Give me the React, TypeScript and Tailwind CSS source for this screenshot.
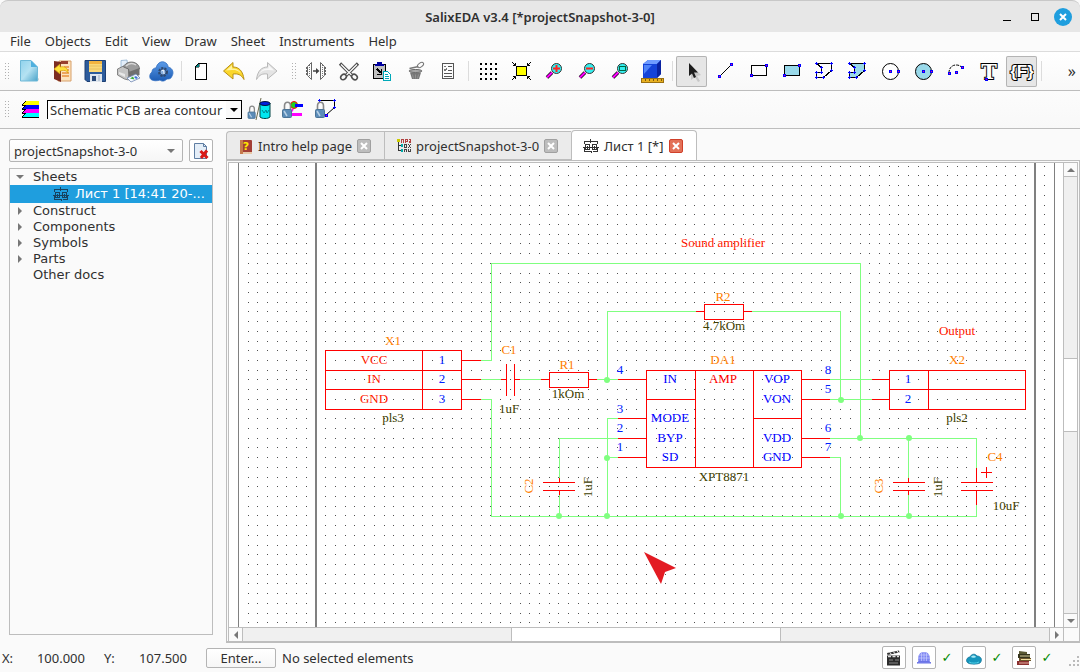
import React from 'react';
import clsx from 'clsx';

const GREEN = '#80ff80';
const RED = '#ff0000';

const Icon: React.FC<{ children: React.ReactNode; crisp?: boolean }> = ({ children, crisp }) => (
  <svg viewBox="0 0 25 25" className="size-[25px] shrink-0" fill="none" shapeRendering={crisp ? 'crispEdges' : 'auto'} aria-hidden="true">
    {children}
  </svg>
);

// small blue handle with a red core, as on every drawing tool
const Handle = ({ x, y }: { x: number; y: number }) => (
  <>
    <rect x={x - 1} y={y - 1} width="3" height="3" fill="#0000ff" />
    <rect x={x} y={y} width="1" height="1" fill="#ff0080" />
  </>
);

const Cross = ({ x, y }: { x: number; y: number }) => (
  <path d={`M${x - 1} ${y + 0.5}h3M${x + 0.5} ${y - 1}v3`} stroke="#0000ff" />
);

const NewIcon = () => (
  <Icon>
    <defs>
      <linearGradient id="page" x1="0" y1="0" x2="1" y2="1">
        <stop offset="0" stopColor="#8fd2ec" /><stop offset=".5" stopColor="#b5e2f2" /><stop offset="1" stopColor="#4aa3c9" />
      </linearGradient>
    </defs>
    <path d="M5 22h16l1-2-1-1z" fill="#9aa" opacity=".6" />
    <path d="M3.500 1.500H14l6.500 6.500v14H3.500z" fill="url(#page)" stroke="#6fb9d8" />
    <path d="M14 1.500V8h6.500z" fill="#4fb0de" />
  </Icon>
);

const OpenIcon = () => (
  <Icon>
    <path d="M9 2h12v20H8z" fill="#fbe3c0" stroke="#d8a06a" />
    <path d="M14 8h5M14 11h5M12 14h7M12 17h7" stroke="#e9913c" strokeWidth="1.500" />
    <path d="M4 2l7 1v20l-7-3z" fill="#7d2d22" />
    <path d="M11 2h7v3h-7z" fill="#99402f" />
    <path d="M4 10l6-5v3c5-1 8 1 8 6-2-3-4-3-8-2v3z" fill="#ffe23c" stroke="#d39b12" strokeWidth=".7" />
  </Icon>
);

const SaveIcon = () => (
  <Icon>
    <path d="M2 1.500h20.500v21H4l-2-2z" fill="#2d5c9c" stroke="#1d3f73" />
    <rect x="6" y="2" width="13" height="11" fill="#fbd978" />
    <path d="M6 2h13v3H6z" fill="#f3b440" />
    <path d="M6 7h13M6 10h13" stroke="#e8c163" />
    <rect x="7" y="15" width="12" height="8" fill="#dfe6ee" />
    <rect x="9" y="17" width="4" height="5" fill="#2b4a78" />
    <path d="M16 16v6" stroke="#9fb0c4" />
  </Icon>
);

const PrinterIcon = () => (
  <Icon>
    <path d="M5 9V1.500l6-.5 1 8z" fill="#e3eefa" stroke="#8fb0d0" strokeWidth=".8" />
    <path d="M1.500 10l6-3 5 3v11l-4-1-7-4z" fill="#c4c4c4" stroke="#6f6f6f" strokeWidth=".8" />
    <path d="M7.500 8c2-5 8-6 12-4 3 1.500 4 4 4 6l-10 5-1-5z" fill="#9c9c9c" stroke="#626262" strokeWidth=".8" />
    <path d="M10 7c3-3 7-3 10-1" stroke="#d8d8d8" strokeWidth="1.500" />
    <path d="M12.500 13l11-4v7l-10 5z" fill="#6f6f6f" />
    <path d="M3 13l6 2v3l-6-3z" fill="#e8e8e8" />
    <path d="M11 19l9-4 4 4-9 4z" fill="#f4f8ff" stroke="#6f86b0" strokeWidth=".8" />
    <path d="M14 19.500l3-2 1.500 3z" fill="#3dad3d" /><path d="M18 18l2-1 2 2-2 1z" fill="#3e74d8" />
  </Icon>
);

const CloudGearIcon = () => (
  <Icon>
    <defs>
      <linearGradient id="cloud" x1="0" y1="0" x2="0" y2="1">
        <stop offset="0" stopColor="#5b9be8" /><stop offset="1" stopColor="#1d5cb4" />
      </linearGradient>
    </defs>
    <path d="M3 21c-3-1-3-6 0-8 0-3 2-4 4-4 1-4 4-7 8-6 3 1 4 3 4 5 5 1 6 6 4 9-1 3-3 3-5 3-2 2-5 3-7 1-3 1-6 1-8 0z" fill="url(#cloud)" stroke="#2e6cc0" strokeWidth=".8" />
    <circle cx="14" cy="13" r="4" stroke="#2f4a70" strokeWidth="2" strokeDasharray="2.200 1.100" />
    <circle cx="14" cy="13" r="3" fill="#86aede" stroke="#2c456c" strokeWidth=".8" />
    <path d="M12.500 12l2-1 .5 4" stroke="#e8f0fa" />
  </Icon>
);

const SheetIcon = () => (
  <Icon crisp>
    <path d="M10.500 4.500h8v16h-11v-13z" fill="#fff" stroke="#000" />
    <path d="M11 4v4H7l4-4z" fill="#008080" stroke="#000" strokeWidth=".5" />
  </Icon>
);

const UndoIcon = () => (
  <Icon>
    <path d="M2.500 12L12 3.500V8c6 0 10 4 11 12.500-3-5-6-6-11-5.500V20z" fill="#fbd72b" stroke="#b8901a" />
    <path d="M5 11.500l6-5.500v3.500c4 0 7 1 9 5-3-3-5-3.500-9-3.500z" fill="#fff3a0" />
  </Icon>
);

const RedoIcon = () => (
  <Icon>
    <path d="M23 12l-9.500-8.500V8c-6 0-10 4-11 12.500 3-5 6-6 11-5.500V20z" fill="#e4e4e4" stroke="#b9b9b9" />
    <path d="M20 11.500L14.500 6v3.500c-4 0-7 1-9 5 3-3 5-3.500 9-3.500z" fill="#f8f8f8" />
  </Icon>
);

const MirrorIcon = () => (
  <Icon>
    <path d="M3.500 7.500l4-4v17l-4-4zM20.500 7.500l-4-4v17l4-4z" stroke="#666" />
    <path d="M5.500 6v12M18.500 6v12" stroke="#777" strokeDasharray="1 1" />
    <path d="M2.500 8v8M21.500 8v8" stroke="#666" strokeDasharray="2 1" />
    <path d="M9 12h4" stroke="#444" strokeWidth="1.500" />
    <path d="M12 9l3.500 3-3.500 3z" fill="#444" />
  </Icon>
);

const CutIcon = () => (
  <Icon>
    <path d="M3 4.500l12 12M21 4.500l-12 12" stroke="#4e4e4e" strokeWidth="3.200" />
    <path d="M4 5.500l11 11M20 5.500l-11 11" stroke="#fff" strokeWidth="1.200" />
    <ellipse cx="6.500" cy="18" rx="3" ry="2.500" stroke="#4e4e4e" strokeWidth="1.500" transform="rotate(-40 6.500 18)" />
    <ellipse cx="17.500" cy="18" rx="3" ry="2.500" stroke="#4e4e4e" strokeWidth="1.500" transform="rotate(40 17.500 18)" />
  </Icon>
);

const PasteIcon = () => (
  <Icon crisp>
    <rect x="3.500" y="5.500" width="12" height="14" fill="#c0c0c0" stroke="#000" />
    <path d="M5 7h9V5h-2V3H7v2H5z" fill="#0000a0" />
    <path d="M7 10l4 4" stroke="#000" strokeWidth="2" />
    <path d="M12 10v6H7v-1h4v-5z" fill="#000" />
    <path d="M13.500 12.500h4l3 3v6h-7z" fill="#fff" stroke="#00a8b8" />
    <path d="M15 15.500h3M15 17.500h4M15 19.500h4" stroke="#00a8b8" />
  </Icon>
);

const TrashIcon = () => (
  <Icon>
    <ellipse cx="17.500" cy="6" rx="3.500" ry="2" stroke="#777" transform="rotate(-35 17.500 6)" />
    <ellipse cx="12.500" cy="12" rx="6.500" ry="1.500" fill="#aaa" stroke="#666" />
    <path d="M6.500 9.500l9-2" stroke="#777" strokeWidth="1.300" />
    <path d="M7 13.500h11l-2 6.500H9z" fill="#777" />
    <path d="M9.500 15.500l1 4M12.500 15.500v4M15.500 15.500l-1 4" stroke="#999" strokeWidth=".8" />
  </Icon>
);

const ListIcon = () => (
  <Icon crisp>
    <rect x="6.500" y="4.500" width="11" height="15" stroke="#555" />
    <path d="M12 7.500h4M12 11.500h4M8 14.500h8M8 17.500h8" stroke="#555" />
    <path d="M8 7.500h2M8 10l1 2 2-3" stroke="#777" />
  </Icon>
);

const GridIcon = () => (
  <Icon crisp>
    {[4, 9, 14, 19].map(y => [5, 10, 15, 20].map(x => <rect key={`${x}-${y}`} x={x} y={y} width="2" height="2" fill="#000" />))}
  </Icon>
);

const FitIcon = () => (
  <Icon>
    <rect x="8.500" y="7.500" width="10" height="9" fill="#ffff00" stroke="#000" />
    <path d="M4 3l3.500 3.500m0-2.500v2.500H5M23 3l-3.500 3.500m0-2.500v2.500H22M4 21l3.500-3.500m0 2.500v-2.500H5M23 21l-3.500-3.500m0 2.500v-2.500H22" stroke="#000" />
  </Icon>
);

const ZoomIcon = ({ kind }: { kind: 'in' | 'out' | 'fit' }) => (
  <Icon>
    <path d="M6 18.500l5-5" stroke="#000" strokeWidth="3.500" />
    <path d="M6 18.500l5-5" stroke="#ff00ff" strokeWidth="2.200" />
    <circle cx="15.500" cy="9.500" r="5" fill="#33f0f0" stroke="#333" />
    {kind === 'in' && <path d="M12 9.500h7M15.500 6v7" stroke="#f22" strokeWidth="2" />}
    {kind === 'out' && <path d="M12 9.500h7" stroke="#f22" strokeWidth="2" />}
    {kind === 'fit' && <rect x="12.500" y="7.500" width="6" height="4" stroke="#064" />}
  </Icon>
);

const CubeIcon = () => (
  <Icon>
    <path d="M3 5l5-4h13v14l-4 4H3z" fill="#1543d8" />
    <path d="M3 5l5-4h13l-4 4z" fill="#6f9cff" />
    <path d="M17 5l4-4v14l-4 4z" fill="#0a23a0" />
    <path d="M4 6h8l-8 9z" fill="#4f83f8" />
    <rect x="1.500" y="19.500" width="22" height="4" fill="#e8b020" stroke="#9a7012" />
    <path d="M5.500 20v2M9.500 20v2M13.500 20v2M17.500 20v2M21.500 20v2" stroke="#7c5a0c" />
  </Icon>
);

const PointerIcon = () => (
  <Icon>
    <path d="M12 6v15l4-3 3 5 2-1-3-5 4-1z" fill="#999" opacity=".4" />
    <path d="M10 4v13l3-2.500 2 4.500 2-1-2-4.500h4z" fill="#1d1d1d" />
  </Icon>
);

const LineIcon = () => (<Icon crisp><path d="M7 18L19 6" stroke="#000" /><Handle x={7} y={17} /><Handle x={19} y={5} /></Icon>);

const RectIcon = ({ fill = 'none' }: { fill?: string }) => (
  <Icon crisp><rect x="6.500" y="6.500" width="15" height="10" fill={fill} stroke="#000" /><Handle x={6} y={16} /><Handle x={21} y={6} /></Icon>
);

const PolyIcon = ({ fill = 'none' }: { fill?: string }) => (
  <Icon crisp>
    <path d="M5.500 4.500h15v7l-8 7h-7v-5h5v-5z" fill={fill} stroke="#000" />
    {[[5, 4], [20, 4], [20, 11], [12, 18], [5, 18], [5, 13], [10, 13], [10, 8]].map(([x, y]) => <Cross key={`${x}-${y}`} x={x} y={y} />)}
  </Icon>
);

const CircleIcon = ({ fill = '#fff' }: { fill?: string }) => (
  <Icon><circle cx="13.500" cy="12.500" r="8" fill={fill} stroke="#000" /><Handle x={13} y={12} /><Handle x={21} y={12} /></Icon>
);

const ArcIcon = () => (
  <Icon><path d="M6 14c0-5 3-8 7-8 3 0 5 1 6 3" stroke="#000" strokeDasharray="3 1" /><Handle x={6} y={14} /><Handle x={13} y={13} /><Handle x={19} y={8} /></Icon>
);

const TextIcon = () => (
  <Icon>
    <text x="13" y="20" textAnchor="middle" fontSize="21" fontWeight="bold" fontFamily="DejaVu Serif, serif" fill="#fff" stroke="#000" strokeWidth="2" paintOrder="stroke">T</text>
    <Handle x={10} y={20} />
  </Icon>
);

const FieldIcon = () => (
  <Icon>
    <text x="13" y="18" textAnchor="middle" fontSize="17" fontWeight="bold" fontFamily="Liberation Sans, sans-serif" fill="#fff" stroke="#000" strokeWidth="2" paintOrder="stroke">{'{F}'}</text>
  </Icon>
);

const LayersIcon = () => (
  <svg viewBox="0 0 18 18" className="size-[18px] shrink-0" shapeRendering="crispEdges" aria-hidden="true">
    {['#ffff00', '#0000ff', '#ff00ff', '#00ffff'].map((c, i) => (
      <g key={c}>
        <path d={`M4 ${i * 4}h14v4H1z`} fill={c} />
        <path d={`M1 ${i * 4 + 4}.500h17M1 ${i * 4 + 4}l4-4`} stroke="#000" />
      </g>
    ))}
  </svg>
);

const Padlock = () => (
  <>
    <path d="M4.500 13V9c0-5 6-5 6 0v4" stroke="#888" strokeWidth="1.600" />
    <rect x="2.500" y="12.500" width="9" height="8" rx="1" fill="#5b8cb8" stroke="#4b7396" />
    <path d="M4 14l3 5" stroke="#b7d0e6" strokeWidth="1.500" />
  </>
);

const LockDbIcon = () => (
  <Icon>
    <g transform="translate(-1 5) scale(.8)"><Padlock /></g>
    <path d="M14 1L9 23" stroke="#6b6b4f" />
    <path d="M13 6h10v14c-2 2-8 2-10 0z" fill="#00e8f0" stroke="#044" />
    <ellipse cx="18" cy="6.500" rx="5" ry="2" fill="#0020e0" stroke="#013" />
    <path d="M15 13l2 3 2-3 1 3 2-3" stroke="#008890" />
  </Icon>
);

const LockNetIcon = () => (
  <Icon>
    <circle cx="14" cy="8" r="3.500" fill="#20d020" stroke="#f00" />
    <path d="M15 8.500h8" stroke="#00f" strokeWidth="3" />
    <path d="M10 17.500h12" stroke="#f0f" strokeWidth="3" />
    <path d="M11 15l2-3" stroke="#f0f" strokeWidth="2" />
    <Padlock />
  </Icon>
);

const LockPolyIcon = () => (
  <Icon>
    <path d="M7 3.500h14.500v7L13 18" stroke="#000" />
    <Cross x={6} y={3} /><Cross x={21} y={3} /><Cross x={21} y={10} />
    <Handle x={13} y={18} />
    <Padlock />
  </Icon>
);

const SchematicIcon = ({ tone = '#333' }: { tone?: string }) => (
  <svg viewBox="0 0 16 14" className="h-[14px] w-4 shrink-0" fill="none" stroke={tone} shapeRendering="crispEdges" aria-hidden="true">
    <path d="M1.500 5V2.500h6M7.500 0v4M8 2.500h6.500V5" />
    <rect x="2.500" y="5.500" width="4" height="5" /><rect x="9.500" y="5.500" width="4" height="5" />
    <path d="M0 8.500h16M4.500 7v3M11.500 7v3M1.500 9v3.500h7V14M10 12.500h4V9" />
  </svg>
);

const BookIcon = () => (
  <svg viewBox="0 0 14 15" className="h-[15px] w-[14px] shrink-0" aria-hidden="true">
    <rect x="1" y="1" width="12" height="14" rx="1" fill="#a33f36" />
    <path d="M1 1h3v14H1z" fill="#c77a4c" />
    <path d="M4 13h9v2H4z" fill="#e8c9a8" />
    <text x="7" y="11" textAnchor="middle" fontSize="11" fontWeight="bold" fontFamily="DejaVu Sans, sans-serif" fill="#ffe800">?</text>
  </svg>
);

const ProjectIcon = () => (
  <svg viewBox="0 0 14 14" className="size-[14px] shrink-0" fill="none" shapeRendering="crispEdges" aria-hidden="true">
    <path d="M1.500 2v9.500h3M1.500 6.500h3" stroke="#333" />
    <rect x="0" y="0" width="3" height="3" fill="#cc0" />
    <path d="M4.500 3.500v-3h2v3M8.500 3.500v-3h2v2h-2M12.500 3.500v-2M12 .5h2M13.500 1v3" stroke="#b04040" />
    <rect x="4" y="5" width="2" height="3" fill="#0aa" /><rect x="4" y="10" width="2" height="3" fill="#0aa" />
    <path d="M7.500 5.500h2v3h-2zM11.500 5v1M13.500 5v1M12.500 6v2M11.500 8v1M13.500 8v1M7.500 13v-2.500h2V13M11.500 10v3M13.500 10v3M12 12.500h1" stroke="#444" />
  </svg>
);

const DeleteDocIcon = () => (
  <svg viewBox="0 0 16 16" className="size-4 shrink-0" fill="none" aria-hidden="true">
    <path d="M1.500.5h9l3 3v12h-12z" fill="#e4eef8" stroke="#5f7ea3" />
    <path d="M10.500.5v3h3" stroke="#5f7ea3" />
    <path d="M7.500 8l7 7M14 7.500l-6 7.500" stroke="#d81818" strokeWidth="3" />
  </svg>
);

const ClapperIcon = () => (
  <svg viewBox="0 0 16 16" className="size-4 shrink-0" aria-hidden="true">
    <path d="M1 3l12-2.500.5 2L1.500 5z" fill="#333" /><path d="M4 2.500l1.500 2M7.500 1.800l1.500 2M11 1l1.500 2" stroke="#fff" />
    <rect x="1" y="5.500" width="13" height="10" fill="#2b2b2b" />
    <path d="M2 6.500h3M6.500 6.500h3M11 6.500h2" stroke="#ddd" strokeWidth="1.500" />
    <path d="M3 10h4M9 10h4M3 13h9" stroke="#888" />
  </svg>
);

const GlobeIcon = () => (
  <svg viewBox="0 0 16 16" className="size-4 shrink-0" fill="none" aria-hidden="true">
    <path d="M2.500 12C1 5 4 2 8 2s7 3 5.500 10z" fill="#7d85f2" />
    <path d="M3 5h10M2 8h12M5.500 3v9M8 2v10M10.500 3v9" stroke="#c9ceff" strokeWidth=".7" />
    <path d="M1 13h14l-2-1.500H3z" fill="#7c84ee" stroke="#6b74e6" />
  </svg>
);

const SkyIcon = () => (
  <svg viewBox="0 0 16 16" className="size-4 shrink-0" aria-hidden="true">
    <path d="M2 13c-3-2-1-6 2-6 1-3 5-4 7-1 4 0 6 4 3 7-2 1.500-10 1.500-12 0z" fill="#1696bd" stroke="#0f6d92" strokeWidth=".7" />
    <path d="M5 7c1-2 4-2 5 0-1 1-4 1-5 0z" fill="#a8eaf6" />
    <path d="M3 12c3 1.500 7 1.500 10 0" stroke="#4fd0e8" fill="none" />
  </svg>
);

const BooksIcon = () => (
  <svg viewBox="0 0 16 16" className="size-4 shrink-0" fill="none" aria-hidden="true">
    <path d="M3 1l8 1v3L3 4z" fill="#5b5a34" /><path d="M2 4h12v4H2z" fill="#35341c" /><path d="M4 6h10" stroke="#d9cf9a" />
    <path d="M3 8h12v3H3z" fill="#6a552a" /><path d="M5 9.500h10" stroke="#f0dfa0" />
    <path d="M1 11h12v4H1z" fill="#8a3030" /><path d="M3 13h10" stroke="#e5b0a0" />
  </svg>
);

interface Tool { label: string; icon: React.ReactNode; active?: boolean }

const FILE_TOOLS: Tool[] = [
  { label: 'New', icon: <NewIcon /> },
  { label: 'Open', icon: <OpenIcon /> },
  { label: 'Save', icon: <SaveIcon /> },
  { label: 'Print', icon: <PrinterIcon /> },
  { label: 'Cloud', icon: <CloudGearIcon /> },
];

const HISTORY_TOOLS: Tool[] = [
  { label: 'New sheet', icon: <SheetIcon /> },
  { label: 'Undo', icon: <UndoIcon /> },
  { label: 'Redo', icon: <RedoIcon /> },
];

const EDIT_TOOLS: Tool[] = [
  { label: 'Mirror', icon: <MirrorIcon /> },
  { label: 'Cut', icon: <CutIcon /> },
  { label: 'Paste', icon: <PasteIcon /> },
  { label: 'Delete', icon: <TrashIcon /> },
  { label: 'Properties', icon: <ListIcon /> },
];

const VIEW_TOOLS: Tool[] = [
  { label: 'Grid', icon: <GridIcon /> },
  { label: 'Fit', icon: <FitIcon /> },
  { label: 'Zoom in', icon: <ZoomIcon kind="in" /> },
  { label: 'Zoom out', icon: <ZoomIcon kind="out" /> },
  { label: 'Zoom window', icon: <ZoomIcon kind="fit" /> },
  { label: '3D view', icon: <CubeIcon /> },
];

const DRAW_TOOLS: Tool[] = [
  { label: 'Select', icon: <PointerIcon />, active: true },
  { label: 'Line', icon: <LineIcon /> },
  { label: 'Rectangle', icon: <RectIcon /> },
  { label: 'Filled rectangle', icon: <RectIcon fill="#99d9ea" /> },
  { label: 'Region', icon: <PolyIcon /> },
  { label: 'Filled region', icon: <PolyIcon fill="#99d9ea" /> },
  { label: 'Circle', icon: <CircleIcon /> },
  { label: 'Filled circle', icon: <CircleIcon fill="#99d9ea" /> },
  { label: 'Arc', icon: <ArcIcon /> },
  { label: 'Text', icon: <TextIcon /> },
  { label: 'Field', icon: <FieldIcon />, active: true },
];

const ToolGroup: React.FC<{ tools: Tool[] }> = ({ tools }) => (
  <>
    {tools.map(t => (
      <button
        key={t.label}
        aria-label={t.label}
        className={clsx('flex size-[31px] shrink-0 items-center justify-center rounded-xs', t.active && 'bg-[#e6e6e6] ring-1 ring-inset ring-[#b4b4b4]')}
      >
        {t.icon}
      </button>
    ))}
  </>
);

const Separator = () => <div className="mr-px ml-0.5 h-5 w-px shrink-0 bg-[#dcdcdc]" />;

const Grip = () => (
  <svg width="5" height="17" className="shrink-0" shapeRendering="crispEdges" aria-hidden="true">
    {[0, 3, 6, 9, 12, 15].map(y => [0, 3].map(x => <rect key={`${x}-${y}`} x={x} y={y} width="1" height="1" fill="#b0b0b0" />))}
  </svg>
);

const MENU = ['File', 'Objects', 'Edit', 'View', 'Draw', 'Sheet', 'Instruments', 'Help'];

const TREE = ['Construct', 'Components', 'Symbols', 'Parts'];

const Chevron = ({ dir }: { dir: 'down' | 'right' | 'left' | 'up' }) => (
  <svg viewBox="0 0 8 8" className="size-2 shrink-0" fill="#777" aria-hidden="true">
    {dir === 'down' && <path d="M0 2h8L4 6z" />}
    {dir === 'up' && <path d="M0 6h8L4 2z" />}
    {dir === 'right' && <path d="M2 0v8l4-4z" />}
    {dir === 'left' && <path d="M6 0v8L2 4z" />}
  </svg>
);

const CloseBox = ({ active, title }: { active?: boolean; title: string }) => (
  <button
    aria-label={`Close ${title}`}
    className={clsx('flex size-[14px] shrink-0 items-center justify-center rounded-xs border', active ? 'border-[#d0402a] bg-[#e37158]' : 'border-[#a0a0a0] bg-[#bdbdbd]')}
  >
    <svg viewBox="0 0 8 8" className="size-2" stroke="#fff" strokeWidth="2" aria-hidden="true"><path d="M1 1l6 6M7 1L1 7" /></svg>
  </button>
);

// sheet coordinates of the snap grid
const GRID_STEP = 9.715;
const gridPath = () => {
  let d = '';
  for (let row = 0; row < 60; row++) {
    const y = Math.floor(166.2 + row * GRID_STEP);
    for (let col = -8; col < 75; col++) {
      d += `M${Math.floor(325.8 + col * GRID_STEP)} ${y}h1v1h-1z`;
    }
  }
  return d;
};

const WIRES = [
  'M481 360.5H491.5V263.5H860.5V438',
  'M481 379.5H501M520 379.5H541M597 379.5H618',
  'M607.5 379V311.5H696M752 311.5H840.5V399',
  'M481 399.5H491.5V516.5H976.5V505',
  'M618 418.5H607.5V516M607 457.5H618',
  'M618 438.5H559.5V478M559.5 495V516',
  'M830 379.5H872M830 399.5H872',
  'M830 438.5H976.5V468',
  'M830 457.5H840.5V516',
  'M908.5 438V478M908.5 495V516',
];

const PARTS = [
  'M325.5 350.5H461.5V409.5H325.5zM325 370.5H461M325 389.5H461M422.5 350V409M461 360.5H481M461 379.5H481M461 399.5H481',
  'M501 379.5H506M506.5 364V396M514.5 364V396M515 379.5H520',
  'M541 379.5H549M549.5 372.5H588.5V387.5H549.5zM589 379.5H597',
  'M696 311.5H704M704.5 304.5H743.5V319.5H704.5zM744 311.5H752',
  'M646.5 370.5H801.5V467.5H646.5zM695.5 370V467M753.5 370V467M646 399.5H695M753 418.5H801',
  'M618 379.5H646M618 418.5H646M618 438.5H646M618 457.5H646',
  'M801 379.5H830M801 399.5H830M801 438.5H830M801 457.5H830',
  'M872 379.5H889M872 399.5H889M889.5 370.5H1025.5V409.5H889.5zM889 389.5H1025M928.5 370V409',
  'M559.5 478V482M543 482.5H575M543 490.5H575M559.5 491V495',
  'M908.5 478V482M893 482.5H925M893 490.5H925M908.5 491V495',
  'M976.5 468V482M961 482.5H993M961 490.5H993M976.5 491V505M981 472.5H992M986.5 467V478',
];

const JOINTS = [[607, 380], [607, 458], [607, 516], [559, 516], [841, 400], [841, 516], [860, 438], [909, 438], [909, 516]];

const LABELS: [string, number, number, string, boolean?][] = [
  ['Sound amplifier', 723, 247, '#ff2000'],
  ['Output', 957, 335, '#ff2000'],
  ['X1', 393, 345, '#ff8000'],
  ['VCC', 374, 364, '#ff2000'],
  ['IN', 374, 383, '#ff2000'],
  ['GND', 374, 403, '#ff2000'],
  ['1', 442, 364, '#0020ff'],
  ['2', 442, 383, '#0020ff'],
  ['3', 442, 403, '#0020ff'],
  ['pls3', 393, 422, '#404000'],
  ['C1', 509, 354, '#ff8000'],
  ['1uF', 509, 413, '#404000'],
  ['R1', 567, 369, '#ff8000'],
  ['1kOm', 568, 398, '#404000'],
  ['R2', 723, 301, '#ff8000'],
  ['4.7kOm', 724, 330, '#404000'],
  ['DA1', 723, 364, '#ff8000'],
  ['AMP', 723, 383, '#ff0000'],
  ['XPT8871', 724, 481, '#404000'],
  ['IN', 670, 383, '#0000ff'],
  ['MODE', 670, 422, '#0000ff'],
  ['BYP', 670, 442, '#0000ff'],
  ['SD', 670, 461, '#0000ff'],
  ['VOP', 777, 383, '#0000ff'],
  ['VON', 777, 403, '#0000ff'],
  ['VDD', 777, 442, '#0000ff'],
  ['GND', 777, 461, '#0000ff'],
  ['4', 620, 374, '#0020ff'],
  ['3', 620, 413, '#0020ff'],
  ['2', 620, 432, '#0020ff'],
  ['1', 620, 451, '#0020ff'],
  ['8', 828, 374, '#0020ff'],
  ['5', 828, 393, '#0020ff'],
  ['6', 828, 432, '#0020ff'],
  ['7', 828, 451, '#0020ff'],
  ['X2', 957, 364, '#ff8000'],
  ['1', 908, 383, '#0020ff'],
  ['2', 908, 403, '#0020ff'],
  ['pls2', 957, 422, '#404000'],
  ['C2', 533, 486, '#ff8000', true],
  ['1uF', 592, 487, '#404000', true],
  ['C3', 883, 486, '#ff8000', true],
  ['1uF', 942, 487, '#404000', true],
  ['C4', 995, 461, '#ff8000'],
  ['10uF', 1006, 510, '#404000'],
];

const SchematicCanvas = () => (
  <svg className="block size-full" role="img" aria-label="Sound amplifier schematic">
    <g transform="translate(-229 -163)" fill="none">
      <g shapeRendering="crispEdges">
        <path d={gridPath()} fill="#505050" />
        <path d="M238.500 160V1000M1054.500 160V1000" stroke="#808080" />
        <path d="M316 160V1000M1035 160V1000" stroke="#808080" strokeWidth="2" />
        <path d={WIRES.join('')} stroke={GREEN} />
        <path d={PARTS.join('')} stroke={RED} />
      </g>
      {JOINTS.map(([x, y]) => <circle key={`${x}-${y}`} cx={x} cy={y} r="3" fill={GREEN} />)}
      <g fontFamily="'Liberation Serif', serif" fontSize="13" textAnchor="middle">
        {LABELS.map(([text, x, y, color, upright], i) => (
          <text key={i} x={x} y={y} fill={color} transform={upright ? `rotate(-90 ${x} ${y})` : undefined}>{text}</text>
        ))}
      </g>
      <path d="M644 552l32 16-11 4-4 12z" fill="#e31b23" />
    </g>
  </svg>
);

const StatusButton: React.FC<{ label: string; children: React.ReactNode }> = ({ label, children }) => (
  <button aria-label={label} className="flex h-[23px] w-6 items-center justify-center rounded-xs border border-[#b4b4b4] bg-white">{children}</button>
);

const Tick = () => <span className="w-[26px] pr-1 text-center font-['DejaVu_Sans'] text-[13px] text-[#008a00]">✓</span>;

const App: React.FC = () => {
  return (
    <div className="flex h-screen flex-col overflow-hidden bg-[#fafafa] font-['Noto_Sans',sans-serif] text-[13px] leading-4 text-[#303030]">
      <header className="relative flex h-8 shrink-0 items-center justify-end rounded-t-lg border-t border-[#c8c8c8] bg-[#e7e7e7] pr-2">
        <h1 className="absolute inset-x-0 text-center font-semibold">SalixEDA v3.4 [*projectSnapshot-3-0]</h1>
        <div className="relative flex items-center">
          <button aria-label="Minimize" className="mr-5 h-2 w-2 border-b border-black" />
          <button aria-label="Maximize" className="mr-[15px] size-2 border border-black" />
          <button aria-label="Close" className="flex size-[18px] items-center justify-center rounded-full bg-[#1f9ede]">
            <svg viewBox="0 0 8 8" className="size-2" stroke="#fff" strokeWidth="2" aria-hidden="true"><path d="M1 1l6 6M7 1L1 7" /></svg>
          </button>
        </div>
      </header>

      <nav className="flex h-5 shrink-0 items-start gap-[14px] border-b border-[#dcdcdc] bg-[#fbfbfb] px-[10px] pt-px">
        {MENU.map(m => <button key={m}>{m}</button>)}
      </nav>

      <div role="toolbar" className="flex h-[39px] shrink-0 items-center gap-0.5 border-b border-[#bdbdbd] bg-linear-to-b from-white to-[#f8f8f8] pl-[5px]">
        <Grip />
        <div className="flex items-center gap-0.5 pl-0.5">
          <ToolGroup tools={FILE_TOOLS} />
          <Separator />
          <ToolGroup tools={HISTORY_TOOLS} />
        </div>
        <div className="flex items-center gap-1 pl-2">
          <Grip />
          <div className="flex items-center gap-0.5">
            <ToolGroup tools={EDIT_TOOLS} />
            <Separator />
            <ToolGroup tools={VIEW_TOOLS} />
            <Separator />
            <ToolGroup tools={DRAW_TOOLS} />
            <Separator />
          </div>
        </div>
        <button aria-label="More tools" className="mr-1 ml-auto text-base leading-4">»</button>
      </div>

      <div role="toolbar" className="flex h-[38px] shrink-0 items-center border-b border-[#bdbdbd] bg-linear-to-b from-[#fcfcfc] to-[#f8f8f8] pl-[5px]">
        <Grip />
        <div className="mr-2 ml-[11px]"><LayersIcon /></div>
        <div className="relative">
          <select aria-label="Layer" className="block h-[19px] w-[195px] appearance-none border-t border-l border-black bg-white pl-0.5">
            <option>Schematic PCB area contour</option>
          </select>
          <span className="pointer-events-none absolute top-px right-0 flex h-[18px] w-4 items-center justify-center border-r border-b border-black bg-[#fafafa]">
            <svg viewBox="0 0 8 4" className="h-1 w-2" aria-hidden="true"><path d="M0 0h8L4 4z" /></svg>
          </span>
        </div>
        <div className="ml-0.5 flex items-center gap-0.5">
          <ToolGroup
            tools={[
              { label: 'Lock component', icon: <LockDbIcon /> },
              { label: 'Lock net', icon: <LockNetIcon /> },
              { label: 'Lock contour', icon: <LockPolyIcon /> },
            ]}
          />
        </div>
      </div>

      <main className="flex min-h-0 flex-1">
        <aside className="flex w-[226px] shrink-0 flex-col pt-[10px] pr-[13px] pb-2 pl-[9px]">
          <div className="flex gap-1.5">
            <div className="relative flex-1">
              <select aria-label="Project" className="block h-[23px] w-full appearance-none rounded-xs border border-[#b4b4b4] bg-linear-to-b from-white to-[#f6f6f6] pl-1">
                <option>projectSnapshot-3-0</option>
              </select>
              <span className="pointer-events-none absolute top-2 right-2"><Chevron dir="down" /></span>
            </div>
            <button aria-label="Close project" className="flex h-[23px] w-6 items-center justify-center rounded-xs border border-[#b4b4b4] bg-white"><DeleteDocIcon /></button>
          </div>
          <ul className="mt-1.5 flex-1 border border-[#bdbdbd] font-['DejaVu_Sans',sans-serif]">
            <li>
              <div className="flex h-4 items-center pl-1.5"><Chevron dir="down" /><span className="ml-[9px]">Sheets</span></div>
              <div className="flex h-[18px] items-center gap-1.5 bg-[#1f9ede] pl-[43px] text-white">
                <SchematicIcon tone="#17425f" />
                <span className="whitespace-nowrap">Лист 1 [14:41 20-...</span>
              </div>
            </li>
            {TREE.map(t => (
              <li key={t} className="flex h-4 items-center pl-1.5"><Chevron dir="right" /><span className="ml-[9px]">{t}</span></li>
            ))}
            <li className="flex h-4 items-center pl-[23px]">Other docs</li>
          </ul>
        </aside>

        <section className="flex min-w-0 flex-1 flex-col">
          <div role="tablist" className="flex h-[31px] shrink-0 items-end pt-px">
            <div role="tab" className="flex h-[29px] w-[158px] items-center gap-[5px] rounded-tl-sm border border-r-0 border-[#bdbdbd] bg-[#ebebeb] pt-px pl-3">
              <BookIcon /><span>Intro help page</span><CloseBox title="Intro help page" />
            </div>
            <div role="tab" className="flex h-[29px] w-[187px] items-center gap-[5px] border border-r-0 border-[#bdbdbd] bg-[#ebebeb] pt-px pl-3">
              <ProjectIcon /><span>projectSnapshot-3-0</span><CloseBox title="projectSnapshot-3-0" />
            </div>
            <div role="tab" aria-selected="true" className="flex h-[30px] w-[126px] items-center gap-[5px] rounded-t-sm border border-b-0 border-[#bdbdbd] bg-white pl-[11px]">
              <SchematicIcon /><span>Лист 1 [*]</span><CloseBox active title="Лист 1" />
            </div>
          </div>
          <div className="flex min-h-0 flex-1 flex-col border border-b-2 border-[#bdbdbd] p-px pb-0">
            <div className="grid min-h-0 flex-1 grid-cols-[1fr_15px] grid-rows-[1fr_14px] border-t border-l border-[#bdbdbd]">
              <div className="min-h-0 min-w-0 overflow-hidden bg-white"><SchematicCanvas /></div>
              <div className="flex flex-col border-x border-[#bdbdbd] bg-[#f0f0f0]">
                <div className="flex h-[14px] items-center justify-center border-b border-[#bdbdbd] bg-[#fafafa]"><Chevron dir="up" /></div>
                <div className="grow-[181]" />
                <div className="h-[74px] border-y border-[#bdbdbd] bg-white" />
                <div className="grow-[181]" />
                <div className="flex h-[14px] items-center justify-center border-t border-[#bdbdbd] bg-[#fafafa]"><Chevron dir="down" /></div>
              </div>
              <div className="flex border-t border-[#bdbdbd] bg-[#f0f0f0]">
                <div className="flex w-[14px] items-center justify-center border-r border-[#bdbdbd] bg-[#fafafa]"><Chevron dir="left" /></div>
                <div className="grow-[268]" />
                <div className="w-[270px] border-x border-[#bdbdbd] bg-white" />
                <div className="grow-[268]" />
                <div className="flex w-[14px] items-center justify-center border-l border-[#bdbdbd] bg-[#fafafa]"><Chevron dir="right" /></div>
              </div>
              <div className="border-t border-l border-[#bdbdbd]" />
            </div>
          </div>
        </section>
      </main>

      <footer className="flex h-[29px] shrink-0 items-center pl-0.5">
        <span className="w-[19px]">X:</span>
        <span className="w-16 text-right">100.000</span>
        <span className="ml-[19px] w-[19px]">Y:</span>
        <span className="w-16 text-right">107.500</span>
        <button className="ml-[19px] h-5 w-[70px] rounded-xs border border-[#b4b4b4] bg-linear-to-b from-white to-[#f6f6f6]">Enter...</button>
        <span className="ml-1.5">No selected elements</span>
        <div className="ml-auto flex items-center">
          <StatusButton label="Record"><ClapperIcon /></StatusButton>
          <span className="w-1.5" />
          <StatusButton label="Server"><GlobeIcon /></StatusButton>
          <Tick />
          <StatusButton label="Cloud"><SkyIcon /></StatusButton>
          <Tick />
          <StatusButton label="Library"><BooksIcon /></StatusButton>
          <Tick />
          <svg width="18" height="22" className="shrink-0" fill="#bbb" aria-hidden="true">
            {[[15, 9], [11, 13], [15, 13], [7, 17], [11, 17], [15, 17]].map(([x, y]) => <rect key={`${x}-${y}`} x={x} y={y} width="2" height="2" />)}
          </svg>
        </div>
      </footer>
    </div>
  );
};

export default App;
